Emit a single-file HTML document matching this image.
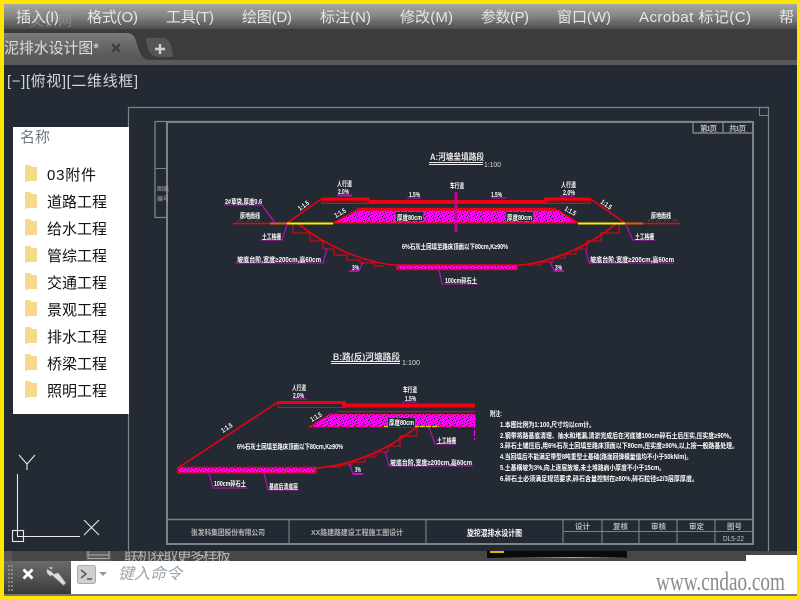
<!DOCTYPE html>
<html><head><meta charset="utf-8"><style>
html,body{margin:0;padding:0;background:#232a33;width:800px;height:600px;overflow:hidden}
svg{display:block;position:absolute;left:0;top:0}
text{font-family:"Liberation Sans","Noto Sans CJK SC",sans-serif}
.m{font-size:15px;fill:#e6e6e6}
.f{font-size:15px;fill:#111}
.w{font-size:7px;fill:#fff;font-weight:700}
.g{font-size:7.500px;fill:#b4b4b4;font-weight:700}
.n{font-size:7px;fill:#fff;font-weight:700}
</style></head><body>
<svg width="800" height="600" viewBox="0 0 800 600" xmlns="http://www.w3.org/2000/svg">
<defs>
<linearGradient id="mb" x1="0" y1="0" x2="0" y2="1"><stop offset="0" stop-color="#a8a8a8"/><stop offset=".5" stop-color="#828282"/><stop offset="1" stop-color="#4e4e4e"/></linearGradient>
<linearGradient id="tb" x1="0" y1="0" x2="0" y2="1"><stop offset="0" stop-color="#7c7c7c"/><stop offset=".5" stop-color="#666"/><stop offset="1" stop-color="#565656"/></linearGradient>
<linearGradient id="cm" x1="0" y1="0" x2="0" y2="1"><stop offset="0" stop-color="#6a6a6a"/><stop offset=".5" stop-color="#555"/><stop offset="1" stop-color="#383838"/></linearGradient>
<linearGradient id="bl" x1="0" y1="0" x2="1" y2="0"><stop offset="0" stop-color="#111"/><stop offset=".3" stop-color="#a33a00"/><stop offset=".6" stop-color="#d0b000"/><stop offset="1" stop-color="#222"/></linearGradient>
<pattern id="dot" width="7" height="6" patternUnits="userSpaceOnUse"><rect width="7" height="6" fill="#ff00ff"/><rect x="1" y="1" width="1" height="1" fill="#222"/><rect x="4" y="0" width="1" height="1" fill="#111"/><rect x="3" y="3" width="1" height="1" fill="#222"/><rect x="6" y="2" width="1" height="1" fill="#222"/><rect x="0" y="4" width="1" height="1" fill="#111"/><rect x="5" y="5" width="1" height="1" fill="#222"/></pattern>
</defs>

<rect width="800" height="600" fill="#232a33"/>

<!-- menu bar -->
<rect x="4" y="4" width="793" height="25" fill="url(#mb)"/>
<text x="30" y="26" font-size="14" fill="#9a9a9a" opacity=".65">义桥网</text>
<text x="16" y="22" class="m" textLength="43">插入(I)</text>
<text x="87" y="22" class="m" textLength="51">格式(O)</text>
<text x="166" y="22" class="m" textLength="48">工具(T)</text>
<text x="242" y="22" class="m" textLength="50">绘图(D)</text>
<text x="320" y="22" class="m" textLength="51">标注(N)</text>
<text x="400" y="22" class="m" textLength="53">修改(M)</text>
<text x="481" y="22" class="m" textLength="48">参数(P)</text>
<text x="557" y="22" class="m" textLength="54">窗口(W)</text>
<text x="639" y="22" class="m" textLength="112">Acrobat 标记(C)</text>
<text x="779" y="22" class="m">帮</text>

<!-- tab bar -->
<rect x="4" y="29" width="793" height="31" fill="#3c3c3c"/>
<rect x="4" y="60" width="793" height="5" fill="#5a5a5a"/>
<path d="M4 33H126C133 33 135 37 137 44C139 52 142 60 150 60H4Z" fill="url(#tb)"/>
<text x="4" y="53" font-size="15" fill="#dedede" textLength="95">泥排水设计图*</text>
<path d="M112 44l8 8M120 44l-8 8" stroke="#3e3e3e" stroke-width="2.400"/>
<path d="M146 38H162C169 38 172 44 173 57H158C151 57 147 50 146 38Z" fill="#565656"/>
<path d="M160 44v10M155 49h10" stroke="#d0d0d0" stroke-width="2.400"/>

<text x="7" y="86" font-size="15" fill="#d4d4d4" textLength="131">[−][俯视][二维线框]</text>

<!-- outer frames -->
<g fill="none" stroke="#7f8388">
<path d="M128.500 551V107.500H768.500V551" stroke-width="1.200"/>
<path d="M759.500 107.500V115.500H768.500" stroke-width="1"/>
<path d="M167 121.500V217.500H155V121.500H752" stroke-width="1.300"/>
<path d="M155 168.500H167" stroke-width="1"/>
<rect x="167" y="122" width="586" height="422" stroke-width="2"/>
<path d="M167 519.500H753M693 133H753M693 122V133M723 122V133" stroke-width="1.400"/>
<path d="M289 519.500V544M426 519.500V544M563 519.500V544M602 519.500V544M639 519.500V544M677 519.500V544M715 519.500V544" stroke-width="1.100"/>
</g>
<path d="M563 531.500H753" stroke="#8a7a80" stroke-width="1"/>
<text x="700" y="131" class="g" textLength="17" lengthAdjust="spacing">第 1 页</text>
<text x="729" y="131" class="g" textLength="17" lengthAdjust="spacing">共 1 页</text>
<text x="157" y="191" font-size="6" fill="#aaa">图纸</text>
<text x="157" y="201" font-size="6" fill="#aaa">编号</text>
<text x="191" y="535" class="g" textLength="74" lengthAdjust="spacingAndGlyphs">张发科集团股份有限公司</text>
<text x="311" y="535" class="g" textLength="92" lengthAdjust="spacingAndGlyphs">XX路建路建设工程施工图设计</text>
<text x="467" y="536" font-size="8.500" font-weight="700" fill="#fff" textLength="55" lengthAdjust="spacingAndGlyphs">旋挖混排水设计图</text>
<text x="575" y="529" class="g" textLength="15">设 计</text>
<text x="613" y="529" class="g" textLength="15">复 核</text>
<text x="651" y="529" class="g" textLength="15">审 核</text>
<text x="689" y="529" class="g" textLength="15">审 定</text>
<text x="727" y="529" class="g" textLength="15">图 号</text>
<text x="723" y="541" font-size="7.500" fill="#ccc" textLength="21" lengthAdjust="spacingAndGlyphs">DL5-22</text>

<!-- Drawing A -->
<text x="430" y="160" font-size="9" font-weight="700" fill="#e8e8e8" textLength="54" lengthAdjust="spacingAndGlyphs">A:河塘垒填路段</text>
<path d="M429 162.500H483M429 164.500H483" stroke="#eee" stroke-width="1.100"/>
<text x="484" y="167" font-size="7.500" fill="#ddd" textLength="17" lengthAdjust="spacingAndGlyphs">1:100</text>

<path d="M333 223L357 210H558L578 223Z" fill="url(#dot)" stroke="#f00010" stroke-width="1.500"/>
<g fill="none" stroke="#f00010">
<path d="M233 223.500H270M643 223.500H680" stroke-width="1.500"/>
<path d="M287 223L322 198.500M590 198.500L625 223" stroke-width="1.500"/>
<path d="M322 199H370M544 199H590" stroke-width="3"/>
<path d="M322 203.500H370M544 203.500H590M322 198V204M590 198V204" stroke-width="1.100"/>
<path d="M365 202H548" stroke-width="4"/>
<path d="M357 208.500H556" stroke-width="1.500"/>
<path d="M297 223C325 245 360 262 397 265.500M617 223C590 245 555 262 517 265.500" stroke-width="1.500"/>
<path d="M293 223V233H310V241H323V249H334V255H347V260H360V263H374V266H384" stroke-width="1.100"/>
<path d="M619 223V233H601V241H587V249H576V254H565V258H553V262H541V265H528" stroke-width="1.100"/>
</g>
<path d="M323 201.500H369M545 201.500H589" stroke="#901010" stroke-width="2"/>
<rect x="397" y="265" width="120" height="4.500" fill="url(#dot)" stroke="#f00010" stroke-width="1.500"/>
<path d="M270 223.500H287M625 223.500H643" stroke="#e06010" stroke-width="2"/>
<path d="M287 223.500H333M578 223.500H625" stroke="#ffee00" stroke-width="2"/>
<path d="M456 192V232" stroke="#c000c0" stroke-width="3"/>
<path d="M456 192V232" stroke="#e00040" stroke-width="1"/>

<g fill="none" stroke="#c010c0" stroke-width="1.100">
<path d="M224 205H262L275 223"/>
<path d="M260 240H282L287 225"/>
<path d="M235 263H323L327 248"/>
<path d="M349 271H359L363 262"/>
<path d="M439 270L442 284H478"/>
<path d="M337 195H352M560 196H575M407 198H421M492 198H506"/>
<path d="M626 225L633 240H655"/>
<path d="M586 250L589 263H674"/>
<path d="M550 261L554 271H564"/>
</g>
<path d="M337 195.500H352M349 271H359M554 271H564" stroke="#c010c0" stroke-width="1.800"/>
<text x="225" y="204" class="w" textLength="37" lengthAdjust="spacingAndGlyphs">2#草袋,厚度0.6</text>
<text x="240" y="218" class="w" fill="#ddd" textLength="20" lengthAdjust="spacingAndGlyphs">原地面线</text>
<text x="262" y="239" class="w" textLength="19" lengthAdjust="spacingAndGlyphs">土工格栅</text>
<text x="237" y="262" class="w" textLength="84" lengthAdjust="spacingAndGlyphs">坡底台阶,宽度≥200cm,高60cm</text>
<text x="352" y="270" class="w" textLength="7" lengthAdjust="spacingAndGlyphs">3%</text>
<text x="445" y="283" class="w" textLength="32" lengthAdjust="spacingAndGlyphs">100cm碎石土</text>
<text x="337" y="186" class="w" textLength="15" lengthAdjust="spacingAndGlyphs">人行道</text>
<text x="338" y="194" class="w" textLength="11" lengthAdjust="spacingAndGlyphs">2.0%</text>
<text x="409" y="197" class="w" textLength="11" lengthAdjust="spacingAndGlyphs">1.5%</text>
<text x="450" y="188" class="w" textLength="14" lengthAdjust="spacingAndGlyphs">车行道</text>
<text transform="translate(300 211) rotate(-35)" class="w" textLength="12" lengthAdjust="spacingAndGlyphs">1:1.5</text>
<text transform="translate(336 218) rotate(-30)" class="w" textLength="12" lengthAdjust="spacingAndGlyphs">1:1.5</text>
<rect x="396" y="212" width="27" height="9" fill="#232a33"/>
<rect x="506" y="212" width="27" height="9" fill="#232a33"/>
<text x="397" y="220" class="w" textLength="25" lengthAdjust="spacingAndGlyphs">厚度80cm</text>
<text x="507" y="220" class="w" textLength="25" lengthAdjust="spacingAndGlyphs">厚度80cm</text>
<text x="402" y="249" class="w" textLength="106" lengthAdjust="spacingAndGlyphs">6%石灰土回填至路床顶面以下80cm,K≥90%</text>
<text x="561" y="187" class="w" textLength="15" lengthAdjust="spacingAndGlyphs">人行道</text>
<text x="563" y="195" class="w" textLength="12" lengthAdjust="spacingAndGlyphs">2.0%</text>
<text x="491" y="197" class="w" textLength="11" lengthAdjust="spacingAndGlyphs">1.5%</text>
<text transform="translate(600 203) rotate(35)" class="w" textLength="12" lengthAdjust="spacingAndGlyphs">1:1.5</text>
<text transform="translate(564 210) rotate(30)" class="w" textLength="12" lengthAdjust="spacingAndGlyphs">1:1.5</text>
<text x="651" y="218" class="w" textLength="20" lengthAdjust="spacingAndGlyphs">原地面线</text>
<text x="635" y="239" class="w" textLength="19" lengthAdjust="spacingAndGlyphs">土工格栅</text>
<text x="590" y="262" class="w" textLength="84" lengthAdjust="spacingAndGlyphs">坡底台阶,宽度≥200cm,高60cm</text>
<text x="555" y="270" class="w" textLength="7" lengthAdjust="spacingAndGlyphs">3%</text>
<path d="M237 222l3-3 2 3M247 222l3-3 2 3M255 222l2-3 2 3M648 222l2-3 3 3M656 222l2-3 3 3M664 222l2-3 3 3M673 222l2-3 3 3" stroke="#2a5a30" fill="none"/>

<!-- Drawing B -->
<text x="333" y="360" font-size="9" font-weight="700" fill="#e0e0e0" textLength="67" lengthAdjust="spacingAndGlyphs">B:路(反)河塘路段</text>
<path d="M331 361.500H400M331 363.500H400" stroke="#eee" stroke-width="1.100"/>
<text x="402" y="365" font-size="7.500" fill="#ddd" textLength="18" lengthAdjust="spacingAndGlyphs">1:100</text>

<path d="M309 427L330 414H475V427Z" fill="url(#dot)" stroke="#f00010" stroke-width=".8"/>
<g fill="none" stroke="#f00010">
<path d="M178 468L278 402" stroke-width="1.500"/>
<path d="M278 402.500H346" stroke-width="3"/>
<path d="M278 407.500H346M278 402V407" stroke-width="1.100"/>
<path d="M342 405.500H475" stroke-width="4"/>
<path d="M337 411.500H475" stroke-width="1.300"/>
<path d="M417 427C390 448 355 465 317 468" stroke-width="1.500"/>
<path d="M417 427V436H400V446H388V452H376V457H365V462H352V465H340V467H326" stroke-width="1.100"/>
</g>
<rect x="178" y="467.500" width="138" height="5.500" fill="url(#dot)" stroke="#f00010" stroke-width="1.500"/>
<path d="M384 426.500H439" stroke="#e0d000" stroke-width="1.200" stroke-dasharray="5 1"/>
<path d="M474.500 414V440" stroke="#ff00ff" stroke-width="1.200" stroke-dasharray="6 2"/>
<g fill="none" stroke="#c010c0" stroke-width="1.100">
<path d="M292 399H307M402 402H417"/>
<path d="M429 427L435 444H456"/>
<path d="M385 452L389 466H473"/>
<path d="M349 463L353 474H363"/>
<path d="M209 473L213 488H247"/>
<path d="M264 473L268 490H299"/>
</g>
<path d="M353 474H363" stroke="#c010c0" stroke-width="2"/>
<text x="292" y="390" class="w" textLength="14" lengthAdjust="spacingAndGlyphs">人行道</text>
<text x="293" y="398" class="w" textLength="11" lengthAdjust="spacingAndGlyphs">2.0%</text>
<text x="403" y="392" class="w" textLength="14" lengthAdjust="spacingAndGlyphs">车行道</text>
<text x="405" y="401" class="w" textLength="11" lengthAdjust="spacingAndGlyphs">1.5%</text>
<text transform="translate(223 433) rotate(-33)" class="w" textLength="12" lengthAdjust="spacingAndGlyphs">1:1.5</text>
<text transform="translate(312 422) rotate(-30)" class="w" textLength="12" lengthAdjust="spacingAndGlyphs">1:1.5</text>
<text x="237" y="449" class="w" textLength="106" lengthAdjust="spacingAndGlyphs">6%石灰土回填至路床顶面以下80cm,K≥90%</text>
<rect x="388" y="418" width="27" height="9" fill="#232a33"/>
<text x="389" y="425" class="w" textLength="25" lengthAdjust="spacingAndGlyphs">厚度80cm</text>
<text x="437" y="443" class="w" textLength="19" lengthAdjust="spacingAndGlyphs">土工格栅</text>
<text x="390" y="465" class="w" textLength="82" lengthAdjust="spacingAndGlyphs">坡底台阶,宽度≥200cm,高60cm</text>
<text x="355" y="472" class="w" textLength="6" lengthAdjust="spacingAndGlyphs">3%</text>
<text x="214" y="486" class="w" textLength="32" lengthAdjust="spacingAndGlyphs">100cm碎石土</text>
<text x="269" y="489" class="w" textLength="29" lengthAdjust="spacingAndGlyphs">基底后清底层</text>

<!-- notes -->
<text x="490" y="416" class="n" textLength="12" lengthAdjust="spacingAndGlyphs">附注:</text>
<text x="500" y="427" class="n" textLength="95" lengthAdjust="spacingAndGlyphs">1.本图比例为1:100,尺寸均以cm计。</text>
<text x="500" y="438" class="n" textLength="235" lengthAdjust="spacingAndGlyphs">2.钢带将路基底清理、抽水和堵漏,清淤完成后在河底铺100cm碎石土后压实,压实度≥90%。</text>
<text x="500" y="448" class="n" textLength="238" lengthAdjust="spacingAndGlyphs">3.碎石土铺压后,用6%石灰土回填至路床顶面以下80cm,压实度≥90%,以上按一般路基处理。</text>
<text x="500" y="459" class="n" textLength="192" lengthAdjust="spacingAndGlyphs">4.当回填后不能满足带型8吨重型土基础(路面回弹模量值均不小于50kN/m)。</text>
<text x="500" y="470" class="n" textLength="165" lengthAdjust="spacingAndGlyphs">5.土基横坡为3%,向上逐层放坡,未土堆路肩小厚度不小于15cm。</text>
<text x="500" y="481" class="n" textLength="198" lengthAdjust="spacingAndGlyphs">6.碎石土必须满足规范要求,碎石含量控制在≥80%,碎石粒径≤2/3层厚厚度。</text>

<!-- UCS -->
<g fill="none" stroke="#e8e8e8" stroke-width="1.100">
<path d="M19 455L27 464L35 455M27 464V470"/>
<path d="M17.500 474V537"/>
<rect x="12.500" y="530.500" width="11" height="11"/>
<path d="M17 536.500H80"/>
<path d="M84 520L99 535M99 520L84 535"/>
</g>

<!-- folder panel -->
<rect x="13" y="127" width="116" height="287" fill="#fff"/>
<text x="20" y="142" font-size="15" fill="#6f7b88">名称</text>
<g fill="#f7d98d">
<path d="M25 165h5l2 2h5v14h-8l-4 1z"/><path d="M25 192h5l2 2h5v14h-8l-4 1z"/><path d="M25 219h5l2 2h5v14h-8l-4 1z"/><path d="M25 246h5l2 2h5v14h-8l-4 1z"/><path d="M25 273h5l2 2h5v14h-8l-4 1z"/><path d="M25 300h5l2 2h5v14h-8l-4 1z"/><path d="M25 327h5l2 2h5v14h-8l-4 1z"/><path d="M25 354h5l2 2h5v14h-8l-4 1z"/><path d="M25 381h5l2 2h5v14h-8l-4 1z"/>
</g>
<text x="47" y="180" class="f" textLength="49">03附件</text>
<text x="47" y="207" class="f">道路工程</text>
<text x="47" y="234" class="f">给水工程</text>
<text x="47" y="261" class="f">管综工程</text>
<text x="47" y="288" class="f">交通工程</text>
<text x="47" y="315" class="f">景观工程</text>
<text x="47" y="342" class="f">排水工程</text>
<text x="47" y="369" class="f">桥梁工程</text>
<text x="47" y="396" class="f">照明工程</text>

<!-- bottom area -->
<rect x="4" y="551" width="793" height="10" fill="#474747"/>
<rect x="4" y="551" width="8" height="10" fill="#555"/>
<rect x="86" y="551" width="25" height="10" fill="#5c5c5c"/>
<path d="M88 551V558.500H109V551M88 555H109" stroke="#aaa" fill="none"/>
<svg x="0" y="551" width="800" height="10" viewBox="0 551 800 10">
<text x="124" y="561" font-size="15" fill="#b4b4b4" textLength="107">联机获取更多样板</text>
</svg>
<rect x="487" y="551" width="140" height="7" fill="#0a0a0a"/>
<rect x="490" y="551" width="14" height="2" fill="#e0b800"/>
<rect x="495" y="557" width="130" height="1" fill="url(#bl)"/>
<rect x="746" y="555" width="51" height="8" fill="#fff"/>
<rect x="71" y="561" width="726" height="33" fill="#fff"/>
<rect x="4" y="561" width="67" height="33" fill="url(#cm)"/>
<path d="M9 565v26M12 565v26" stroke="#999" stroke-width="1.500" stroke-dasharray="2 2"/>
<path d="M23.500 569.500l9 9M32.500 569.500l-9 9" stroke="#fff" stroke-width="2.800"/>
<path d="M48 567l5 0 -2 4 3 3 4-1.500 1 1 7 9.500-2.500 2.500-9-8-2-2-3 .5-3-3.500 .5-4 3 2.500 2-1z" fill="#ddd" stroke="#777" stroke-width=".7"/>
<rect x="77.500" y="565.500" width="18" height="18" rx="2" fill="#cfcfcf" stroke="#aaa"/>
<path d="M81 570l5 4-5 4" stroke="#555" stroke-width="1.500" fill="none"/>
<path d="M87 579h5" stroke="#555" stroke-width="1.500"/>
<path d="M99 572h8l-4 4z" fill="#999"/>
<text x="118" y="579" font-size="16" font-style="italic" fill="#9aa5af" textLength="64">键入命令</text>
<text x="656" y="590" style="font-family:'Liberation Serif',serif" font-size="26" fill="#8a8a8a" textLength="129" lengthAdjust="spacingAndGlyphs">www.cndao.com</text>
<rect x="4" y="594" width="793" height="2" fill="#777"/>

<!-- yellow border -->
<path d="M0 0H800V600H0ZM4 4V596H797V4Z" fill="#ffe600" fill-rule="evenodd"/>
</svg>
</body></html>
